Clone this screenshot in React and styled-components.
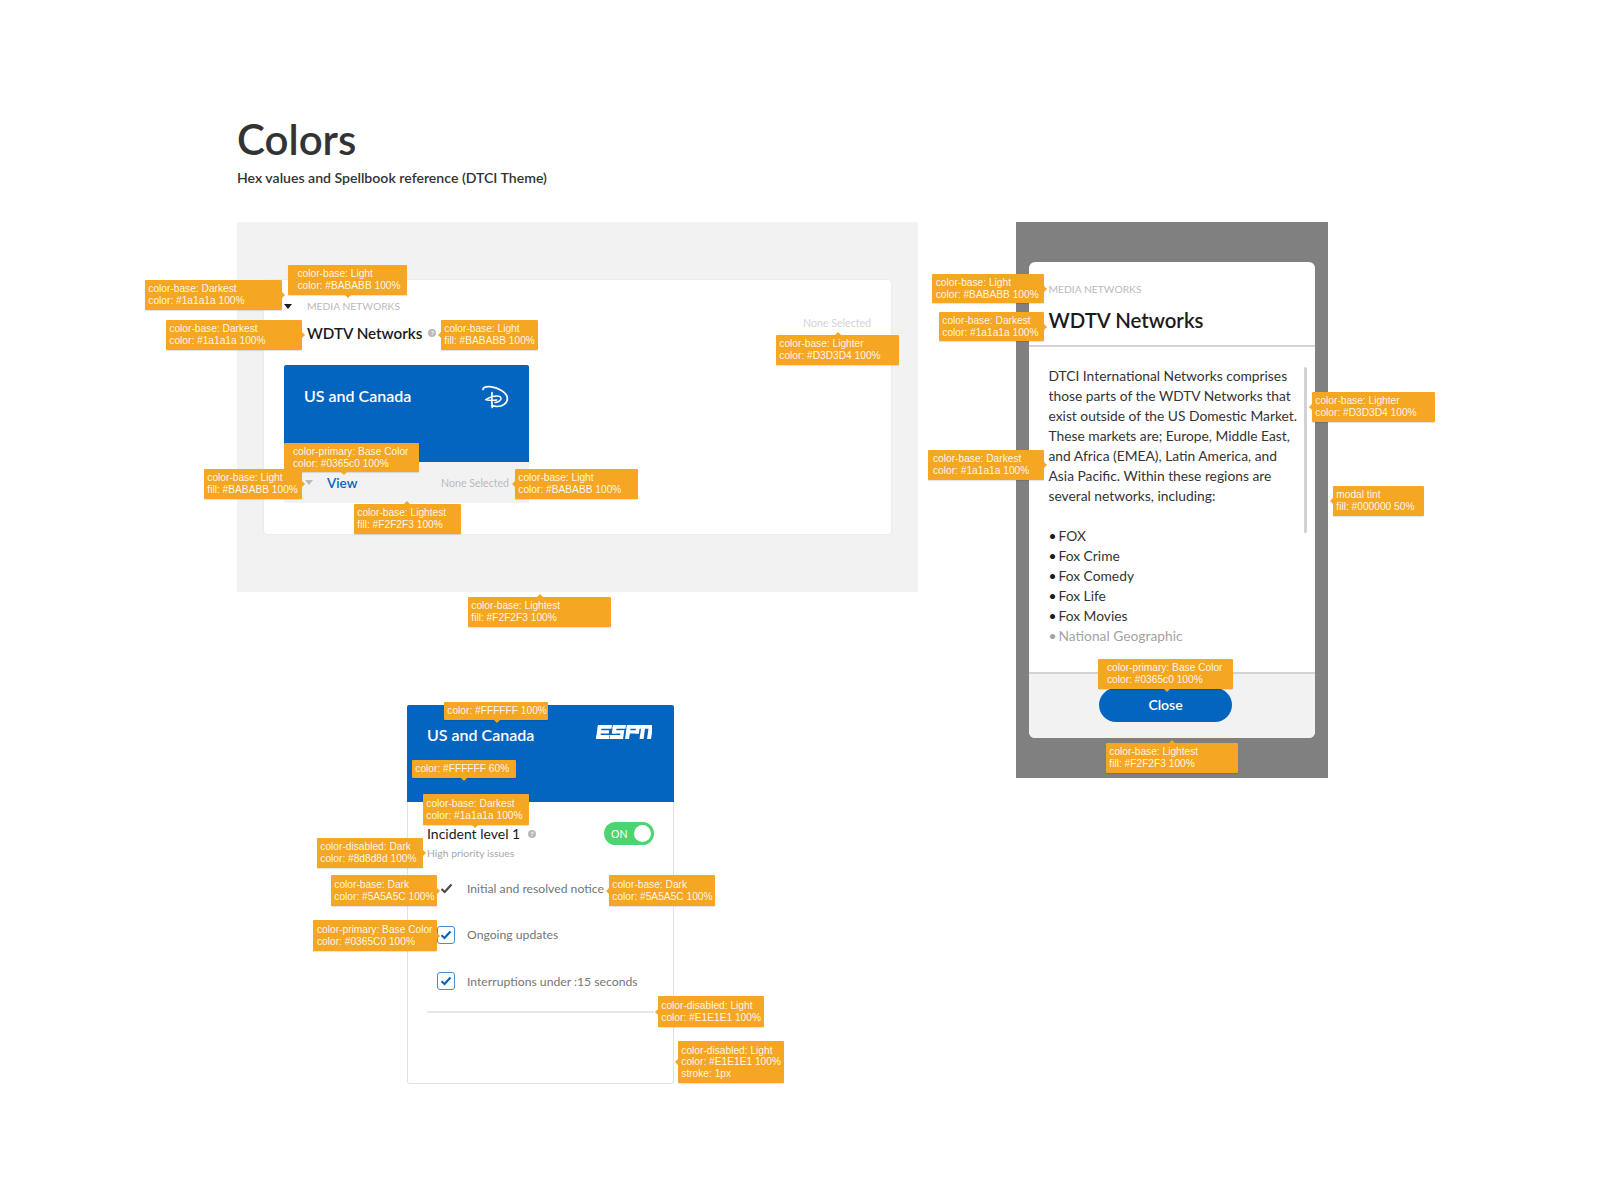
import React from 'react'
import styled, { createGlobalStyle, css } from 'styled-components'

const GlobalStyle = createGlobalStyle`
  html, body { margin: 0; padding: 0; background: #fff; }
  body { font-family: Lato, "Noto Sans", sans-serif; color: #1a1a1a; }
  * { box-sizing: border-box; }
`

const callouts = [
  { x: 288, y: 265, w: 119, h: 30, pad: 9.5, arrow: 'bottom', at: 60, text: 'color-base: Light\ncolor: #BABABB 100%' },
  { x: 145, y: 280, w: 137, h: 30, arrow: 'right', text: 'color-base: Darkest\ncolor: #1a1a1a 100%' },
  { x: 166, y: 320, w: 136, h: 30, arrow: 'right', text: 'color-base: Darkest\ncolor: #1a1a1a 100%' },
  { x: 441, y: 320, w: 97, h: 30, arrow: 'left', text: 'color-base: Light\nfill: #BABABB 100%' },
  { x: 776, y: 335, w: 123, h: 30, arrow: 'top', at: 62, text: 'color-base: Lighter\ncolor: #D3D3D4 100%' },
  { x: 284, y: 443, w: 135, h: 29, pad: 9, arrow: 'bottom', at: 60, text: 'color-primary: Base Color\ncolor: #0365c0 100%' },
  { x: 204, y: 469, w: 98, h: 30, arrow: 'right', text: 'color-base: Light\nfill: #BABABB 100%' },
  { x: 515, y: 469, w: 123, h: 30, arrow: 'left', text: 'color-base: Light\ncolor: #BABABB 100%' },
  { x: 354, y: 504, w: 107, h: 30, arrow: 'top', at: 53, text: 'color-base: Lightest\nfill: #F2F2F3 100%' },
  { x: 468, y: 597, w: 143, h: 30, arrow: 'top', at: 72, text: 'color-base: Lightest\nfill: #F2F2F3 100%' },
  { x: 444, y: 702, w: 104, h: 18, arrow: 'bottom', at: 53, text: 'color: #FFFFFF 100%' },
  { x: 412, y: 760, w: 104, h: 18, arrow: 'bottom', at: 52, text: 'color: #FFFFFF 60%' },
  { x: 423, y: 794, w: 106, h: 31, arrow: 'bottom', at: 52, text: 'color-base: Darkest\ncolor: #1a1a1a 100%' },
  { x: 317, y: 838, w: 106, h: 30, arrow: 'right', text: 'color-disabled: Dark\ncolor: #8d8d8d 100%' },
  { x: 331, y: 875, w: 106, h: 31, arrow: 'right', text: 'color-base: Dark\ncolor: #5A5A5C 100%' },
  { x: 609, y: 875, w: 106, h: 31, arrow: 'left', text: 'color-base: Dark\ncolor: #5A5A5C 100%' },
  { x: 313, y: 920, w: 124, h: 31, pad: 4, arrow: 'right', text: 'color-primary: Base Color\ncolor: #0365C0 100%' },
  { x: 658, y: 996, w: 106, h: 31, arrow: 'left', text: 'color-disabled: Light\ncolor: #E1E1E1 100%' },
  { x: 678, y: 1041, w: 106, h: 42, arrow: 'left', text: 'color-disabled: Light\ncolor: #E1E1E1 100%\nstroke: 1px' },
  { x: 932, y: 274, w: 112, h: 29, pad: 3.7, arrow: 'right', text: 'color-base: Light\ncolor: #BABABB 100%' },
  { x: 939, y: 312, w: 105, h: 29, arrow: 'right', text: 'color-base: Darkest\ncolor: #1a1a1a 100%' },
  { x: 1312, y: 392, w: 123, h: 30, arrow: 'left', text: 'color-base: Lighter\ncolor: #D3D3D4 100%' },
  { x: 928, y: 450, w: 116, h: 30, pad: 5, arrow: 'right', text: 'color-base: Darkest\ncolor: #1a1a1a 100%' },
  { x: 1333, y: 486, w: 91, h: 30, arrow: 'left', text: 'modal tint\nfill: #000000 50%' },
  { x: 1098, y: 659, w: 135, h: 30, pad: 9, arrow: 'bottom', at: 69, text: 'color-primary: Base Color\ncolor: #0365c0 100%' },
  { x: 1106, y: 743, w: 132, h: 30, arrow: 'top', at: 66, text: 'color-base: Lightest\nfill: #F2F2F3 100%' },
]

const arrowStyles = {
  top: css`
    left: ${(p) => p.$at}px; top: -3px; margin-left: -3px;
    border-width: 0 3px 3px; border-color: transparent transparent #f5a623;
  `,
  bottom: css`
    left: ${(p) => p.$at}px; bottom: -3px; margin-left: -3px;
    border-width: 3px 3px 0; border-color: #f5a623 transparent transparent;
  `,
  left: css`
    left: -3px; top: 50%; margin-top: -3px;
    border-width: 3px 3px 3px 0; border-color: transparent #f5a623 transparent transparent;
  `,
  right: css`
    right: -3px; top: 50%; margin-top: -3px;
    border-width: 3px 0 3px 3px; border-color: transparent transparent transparent #f5a623;
  `,
}

const Callout = styled.div`
  position: absolute;
  left: ${(p) => p.$x}px;
  top: ${(p) => p.$y}px;
  width: ${(p) => p.$w}px;
  height: ${(p) => p.$h}px;
  display: flex;
  align-items: center;
  padding-left: ${(p) => p.$pad}px;
  background: #f5a623;
  border-radius: 1px;
  box-shadow: 0 1px 1px rgba(0, 0, 0, 0.12);
  color: rgba(255, 255, 255, 0.92);
  font: 10.2px/11.6px "Liberation Sans", Arial, sans-serif;
  white-space: pre;
  &::after {
    content: '';
    position: absolute;
    width: 0;
    height: 0;
    border-style: solid;
    ${(p) => arrowStyles[p.$arrow]}
  }
`

const Page = styled.div`
  position: relative;
  width: 1600px;
  height: 1184px;
  padding: 115px 0 0 237px;
  overflow: hidden;
`

const Title = styled.h1`
  margin: 0;
  font-size: 42px;
  line-height: 48px;
  font-weight: 600;
  color: #333;
`

const Subtitle = styled.p`
  margin: 5px 0 0;
  font-size: 14.1px;
  line-height: 20px;
  font-weight: 600;
  color: #333;
`

const Columns = styled.div`
  display: flex;
  align-items: flex-start;
  gap: 97.5px;
  margin-top: 34px;
`

const LeftColumn = styled.div`
  width: 681px;
`

const GrayPanel = styled.section`
  height: 370px;
  padding: 58px 27px;
  background: #f2f2f3;
`

const NetworkCard = styled.div`
  height: 254px;
  padding: 19px 20px 30px;
  background: #fff;
  border-radius: 3px;
  box-shadow: 0 0 2px rgba(0, 0, 0, 0.1);
`

const CardHeader = styled.div`
  display: grid;
  grid-template-columns: 23px 1fr auto;
  margin-bottom: 21px;
`

const Caret = styled.span`
  display: block;
  width: 0;
  height: 0;
  border-style: solid;
  border-width: 5px 4px 0;
  border-color: ${(p) => p.$color} transparent transparent;
  margin-top: ${(p) => p.$top || 0}px;
`

const SmallCaps = styled.div`
  font-size: 10.3px;
  line-height: 14px;
  color: #bababb;
  text-transform: uppercase;
`

const NetworkName = styled.div`
  display: flex;
  align-items: center;
  gap: 6px;
  margin-top: 9px;
  font-size: 15.2px;
  line-height: 22px;
  font-weight: 600;
  color: #1a1a1a;
`

const Help = styled.span`
  display: inline-flex;
  align-items: center;
  justify-content: center;
  width: 8px;
  height: 8px;
  border-radius: 50%;
  background: #bababb;
  color: #fff;
  font-size: 6px;
  line-height: 8px;
  font-weight: 700;
`

const Muted = styled.div`
  font-size: ${(p) => p.$size || 10.6}px;
  line-height: 14px;
  color: ${(p) => p.$color};
  margin-top: ${(p) => p.$top || 0}px;
  margin-left: ${(p) => (p.$push ? 'auto' : 0)};
`

const Tile = styled.div`
  display: flex;
  align-items: flex-start;
  justify-content: space-between;
  height: ${(p) => p.$h}px;
  padding: ${(p) => p.$pad};
  background: #0365c0;
  border-radius: 2px 2px 0 0;
`

const TileTitle = styled.div`
  font-size: 16px;
  line-height: 22px;
  font-weight: 600;
  color: #fff;
`

const Strip = styled.div`
  display: flex;
  align-items: center;
  width: 245px;
  height: 41px;
  padding: 0 20px 0 21px;
  background: #f2f2f3;
`

const ViewLink = styled.span`
  margin-left: 14px;
  font-size: 13.5px;
  font-weight: 600;
  color: #0365c0;
`

const SmallTile = styled.div`
  width: 245px;
`

const ProductCard = styled.section`
  width: 267px;
  margin: 113px 0 0 170px;
`

const ProductBody = styled.div`
  height: 282px;
  padding: 20px 19px 0;
  border: 1px solid #e1e1e1;
  border-top: 0;
  border-radius: 0 0 3px 3px;
`

const IncidentRow = styled.div`
  display: flex;
  align-items: center;
  height: 23px;
  gap: 8px;
`

const IncidentTitle = styled.span`
  font-size: 14px;
  color: #1a1a1a;
`

const Toggle = styled.div`
  display: flex;
  align-items: center;
  justify-content: space-between;
  width: 50px;
  height: 23px;
  margin-left: auto;
  padding: 0 3px 0 7px;
  border-radius: 12px;
  background: #4cd471;
  color: #fff;
  font-size: 10.5px;
`

const Knob = styled.span`
  width: 17px;
  height: 17px;
  border-radius: 50%;
  background: #fff;
`

const OptionList = styled.div`
  margin-top: 5px;
`

const OptionRow = styled.div`
  display: flex;
  align-items: center;
  height: 46.5px;
  font-size: 12.2px;
  color: #757577;
`

const OptionMark = styled.span`
  display: flex;
  align-items: center;
  justify-content: center;
  width: 18px;
  height: 18px;
  margin: 0 12px 0 10px;
  border-radius: 3px;
  border: ${(p) => (p.$boxed ? '1.5px solid #4a8ccf' : '0')};
`

const Divider = styled.div`
  height: 2px;
  margin-top: 6px;
  background: #e8e8e8;
`

const ModalTint = styled.section`
  width: 312px;
  height: 556px;
  padding: 40px 13px;
  background: #808080;
`

const Modal = styled.div`
  display: flex;
  flex-direction: column;
  height: 476px;
  border-radius: 6px;
  background: #fff;
  overflow: hidden;
`

const ModalHeader = styled.div`
  height: 85px;
  padding: 20px 20px 0;
  border-bottom: 2px solid #d3d3d4;
`

const ModalTitle = styled.div`
  margin-top: 10px;
  font-size: 20.4px;
  line-height: 28px;
  font-weight: 600;
  color: #1a1a1a;
`

const ModalBody = styled.div`
  position: relative;
  height: 325px;
  padding: 19px 20px 0;
  font-size: 13.8px;
  line-height: 20px;
  color: #333;
`

const Copy = styled.p`
  margin: 0 0 20px;
  white-space: nowrap;
`

const BulletList = styled.ul`
  margin: 0;
  padding: 0;
  list-style: none;
`

const Bullet = styled.li`
  display: flex;
  color: ${(p) => (p.$faded ? '#a3a3a3' : '#333')};
  &::before {
    content: '•';
    width: 10px;
    color: ${(p) => (p.$faded ? '#a3a3a3' : '#1a1a1a')};
  }
`

const Scrollbar = styled.div`
  position: absolute;
  top: 20px;
  right: 8px;
  width: 3px;
  height: 166px;
  border-radius: 2px;
  background: #d3d3d4;
`

const ModalFooter = styled.div`
  flex: 1;
  display: flex;
  align-items: center;
  justify-content: center;
  padding: 0 12px 2px 0;
  border-top: 2px solid #d3d3d4;
  background: #f2f2f3;
`

const CloseButton = styled.button`
  width: 133px;
  height: 34px;
  padding: 0 0 2px;
  border: 0;
  border-radius: 17px;
  background: #0365c0;
  color: #fff;
  font: 600 14px Lato, sans-serif;
`

const Logo = styled.svg`
  display: block;
  flex: none;
  margin-top: ${(p) => p.$top || 0}px;
`

const DisneyLogo = () => (
  <Logo width="27" height="24" viewBox="0 0 27 24" fill="none" stroke="#fff" strokeLinecap="round">
    <path strokeWidth="1.7" d="M1 4.5C1 2.4 4 1.3 8 1.6c8 .6 17 6 17.4 11.6.3 4.6-4.6 8.4-10.6 8.3-2 0-3.8-.3-5.1-.9" />
    <path strokeWidth="1.7" d="M10 7.5c-.3 5-.3 10 .2 15" />
    <path strokeWidth="1.5" d="M3.8 14.6c3-1.8 9-4 13-3.3 2.7.5 3 2.8.8 4.5-1.5 1.1-3.3 1.5-4.6 1.7" />
    <path strokeWidth="1.3" d="M3.8 14.6c2.5.8 7 1 11 .4" />
  </Logo>
)

const EspnLogo = () => (
  <Logo $top={1} width="56" height="14" viewBox="0 0 56 14" fill="#fff">
    <g transform="translate(2 0) skewX(-8)">
      <rect x="0" y="0" width="14" height="3.8" />
      <rect x="0" y="5.2" width="12" height="3.4" />
      <rect x="0" y="10" width="13" height="4" />
      <rect x="0" y="0" width="4" height="14" />
      <rect x="15" y="0" width="13" height="3.8" />
      <rect x="15" y="0" width="4" height="8.6" />
      <rect x="15" y="5.2" width="12" height="3.4" />
      <rect x="23.5" y="5.2" width="3.5" height="8.8" />
      <rect x="13.5" y="10" width="13" height="4" />
      <rect x="29" y="0" width="26" height="3.8" />
      <rect x="29" y="0" width="4" height="14" />
      <rect x="38.5" y="0" width="3.5" height="8.6" />
      <rect x="29" y="5.2" width="13" height="3.4" />
      <rect x="43.5" y="0" width="4" height="14" />
      <rect x="51" y="0" width="4" height="14" />
    </g>
  </Logo>
)

const DarkCheck = () => (
  <svg width="13" height="11" viewBox="0 0 13 11" fill="none">
    <path d="M1.5 6l3.2 3L11.5 1.5" stroke="#4a4a4c" strokeWidth="2.2" />
  </svg>
)

const BlueCheck = () => (
  <svg width="12" height="10" viewBox="0 0 12 10" fill="none">
    <path d="M1.5 5.3l3 2.7L10.5 1.5" stroke="#0365c0" strokeWidth="2.2" />
  </svg>
)

const options = [
  { label: 'Initial and resolved notice', boxed: false },
  { label: 'Ongoing updates', boxed: true },
  { label: 'Interruptions under :15 seconds', boxed: true },
]

const networks = ['FOX', 'Fox Crime', 'Fox Comedy', 'Fox Life', 'Fox Movies']

export default function App() {
  return (
    <Page>
      <GlobalStyle />
      <Title>Colors</Title>
      <Subtitle>Hex values and Spellbook reference (DTCI Theme)</Subtitle>
      <Columns>
        <LeftColumn>
          <GrayPanel>
            <NetworkCard>
              <CardHeader>
                <Caret $color="#1a1a1a" $top={5} />
                <div>
                  <SmallCaps>Media Networks</SmallCaps>
                  <NetworkName>
                    WDTV Networks <Help>?</Help>
                  </NetworkName>
                </div>
                <Muted $color="#d3d3d4" $top={17}>None Selected</Muted>
              </CardHeader>
              <SmallTile>
                <Tile $h={97} $pad="20px 20px 0">
                  <TileTitle>US and Canada</TileTitle>
                  <DisneyLogo />
                </Tile>
                <Strip>
                  <Caret $color="#bababb" />
                  <ViewLink>View</ViewLink>
                  <Muted $color="#bababb" $push>None Selected</Muted>
                </Strip>
              </SmallTile>
            </NetworkCard>
          </GrayPanel>
          <ProductCard>
            <Tile $h={97} $pad="19px 22px 0 20px">
              <TileTitle>US and Canada</TileTitle>
              <EspnLogo />
            </Tile>
            <ProductBody>
              <IncidentRow>
                <IncidentTitle>Incident level 1</IncidentTitle>
                <Help>?</Help>
                <Toggle>
                  ON
                  <Knob />
                </Toggle>
              </IncidentRow>
              <Muted $color="#a8a8a8" $top={1} $size={10.4}>High priority issues</Muted>
              <OptionList>
                {options.map((o) => (
                  <OptionRow key={o.label}>
                    <OptionMark $boxed={o.boxed}>
                      {o.boxed ? <BlueCheck /> : <DarkCheck />}
                    </OptionMark>
                    {o.label}
                  </OptionRow>
                ))}
              </OptionList>
              <Divider />
            </ProductBody>
          </ProductCard>
        </LeftColumn>
        <ModalTint>
          <Modal>
            <ModalHeader>
              <SmallCaps>Media Networks</SmallCaps>
              <ModalTitle>WDTV Networks</ModalTitle>
            </ModalHeader>
            <ModalBody>
              <Copy>
                DTCI International Networks comprises<br />
                those parts of the WDTV Networks that<br />
                exist outside of the US Domestic Market.<br />
                These markets are; Europe, Middle East,<br />
                and Africa (EMEA), Latin America, and<br />
                Asia Pacific. Within these regions are<br />
                several networks, including:
              </Copy>
              <BulletList>
                {networks.map((n) => (
                  <Bullet key={n}>{n}</Bullet>
                ))}
                <Bullet $faded>National Geographic</Bullet>
              </BulletList>
              <Scrollbar />
            </ModalBody>
            <ModalFooter>
              <CloseButton>Close</CloseButton>
            </ModalFooter>
          </Modal>
        </ModalTint>
      </Columns>
      {callouts.map((c) => (
        <Callout key={`${c.x}-${c.y}`} $x={c.x} $y={c.y} $w={c.w} $h={c.h} $pad={c.pad ?? 3.3} $arrow={c.arrow} $at={c.at}>
          {c.text}
        </Callout>
      ))}
    </Page>
  )
}
